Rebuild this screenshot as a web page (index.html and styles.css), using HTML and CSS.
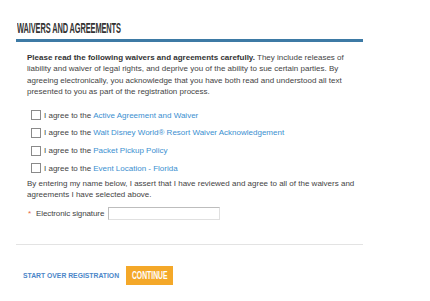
FILE: index.html
```html
<!DOCTYPE html>
<html lang="en">
<head>
    <meta charset="UTF-8">
    <title>Waivers and Agreements</title>
    <link rel="stylesheet" href="styles.css">
</head>
<body>
    <div class="page">
        <h2 class="section-title"><span>WAIVERS AND AGREEMENTS</span></h2>

        <div class="waivers">
            <p class="intro"><b>Please read the following waivers and agreements carefully.</b> They include releases of liability and waiver of legal rights, and deprive you of the ability to sue certain parties. By agreeing electronically, you acknowledge that you have both read and understood all text presented to you as part of the registration process.</p>

            <ul class="agree-list">
                <li><span class="box"></span>I agree to the <a href="#">Active Agreement and Waiver</a></li>
                <li><span class="box"></span>I agree to the <a href="#">Walt Disney World® Resort Waiver Acknowledgement</a></li>
                <li><span class="box"></span>I agree to the <a href="#">Packet Pickup Policy</a></li>
                <li><span class="box"></span>I agree to the <a href="#">Event Location - Florida</a></li>
            </ul>

            <p class="assert">By entering my name below, I assert that I have reviewed and agree to all of the waivers and agreements I have selected above.</p>

            <div class="signature">
                <span class="req">*</span>
                <label>Electronic signature</label>
                <span class="sig-input"></span>
            </div>
        </div>

        <div class="actions">
            <a href="#" class="start-over">START OVER REGISTRATION</a>
            <button class="continue"><span>CONTINUE</span></button>
        </div>
    </div>
</body>
</html>
```

FILE: styles.css
```css
body {
    margin: 0;
    background: #ffffff;
    font-family: "Liberation Sans", Arial, sans-serif;
    color: #444;
}
.page {
    width: 347px;
    margin-left: 16px;
    padding-top: 22px;
}
.section-title {
    margin: 0;
    padding-left: 1px;
    height: 17px;
    border-bottom: 3px solid #3d7aa5;
    font-family: "Liberation Sans", sans-serif;
    font-weight: bold;
    font-size: 14px;
    line-height: 13px;
    color: #333;
    white-space: nowrap;
}
.section-title span {
    display: inline-block;
    transform: scaleX(0.53);
    transform-origin: left center;
    letter-spacing: -0.2px;
}
.waivers {
    padding: 10px 0 0 11px;
    font-size: 8px;
    line-height: 11.4px;
}
.intro {
    margin: 0;
}
.intro b {
    color: #333;
}
.agree-list {
    list-style: none;
    margin: 9px 0 0 0;
    padding: 0 0 0 4px;
}
.agree-list li {
    display: flex;
    align-items: center;
    height: 17.6px;
}
.box {
    width: 8px;
    height: 8px;
    border: 1px solid #8a8a8a;
    margin-right: 3px;
    background: #fff;
}
.agree-list a {
    color: #3b8fd0;
    text-decoration: none;
    margin-left: 2px;
}
.assert {
    margin: 1px 0 0 0;
}
.signature {
    display: flex;
    align-items: center;
    margin-top: 6px;
    padding-left: 1px;
}
.req {
    color: #e8663c;
    width: 8px;
}
.signature label {
    margin-right: 4px;
    letter-spacing: -0.1px;
}
.sig-input {
    width: 110px;
    height: 11px;
    border: 1px solid #bdbdbd;
    border-right-color: #e0e0e0;
    border-bottom-color: #e0e0e0;
}
.actions {
    border-top: 1px solid #e3e3e3;
    margin-top: 24px;
    padding: 21px 0 0 7px;
    display: flex;
    align-items: center;
    gap: 7px;
}
.start-over {
    font-size: 6.8px;
    font-weight: bold;
    color: #4b86c8;
    text-decoration: none;
}
.continue {
    width: 47px;
    height: 19px;
    border: none;
    background: #f4a829;
    color: #ffffff;
    padding: 0;
    display: flex;
    align-items: center;
    justify-content: center;
    font-family: "Liberation Sans", sans-serif;
    font-weight: bold;
    font-size: 11px;
}
.continue span {
    flex-shrink: 0;
    display: inline-block;
    transform: scaleX(0.62);
}
```
